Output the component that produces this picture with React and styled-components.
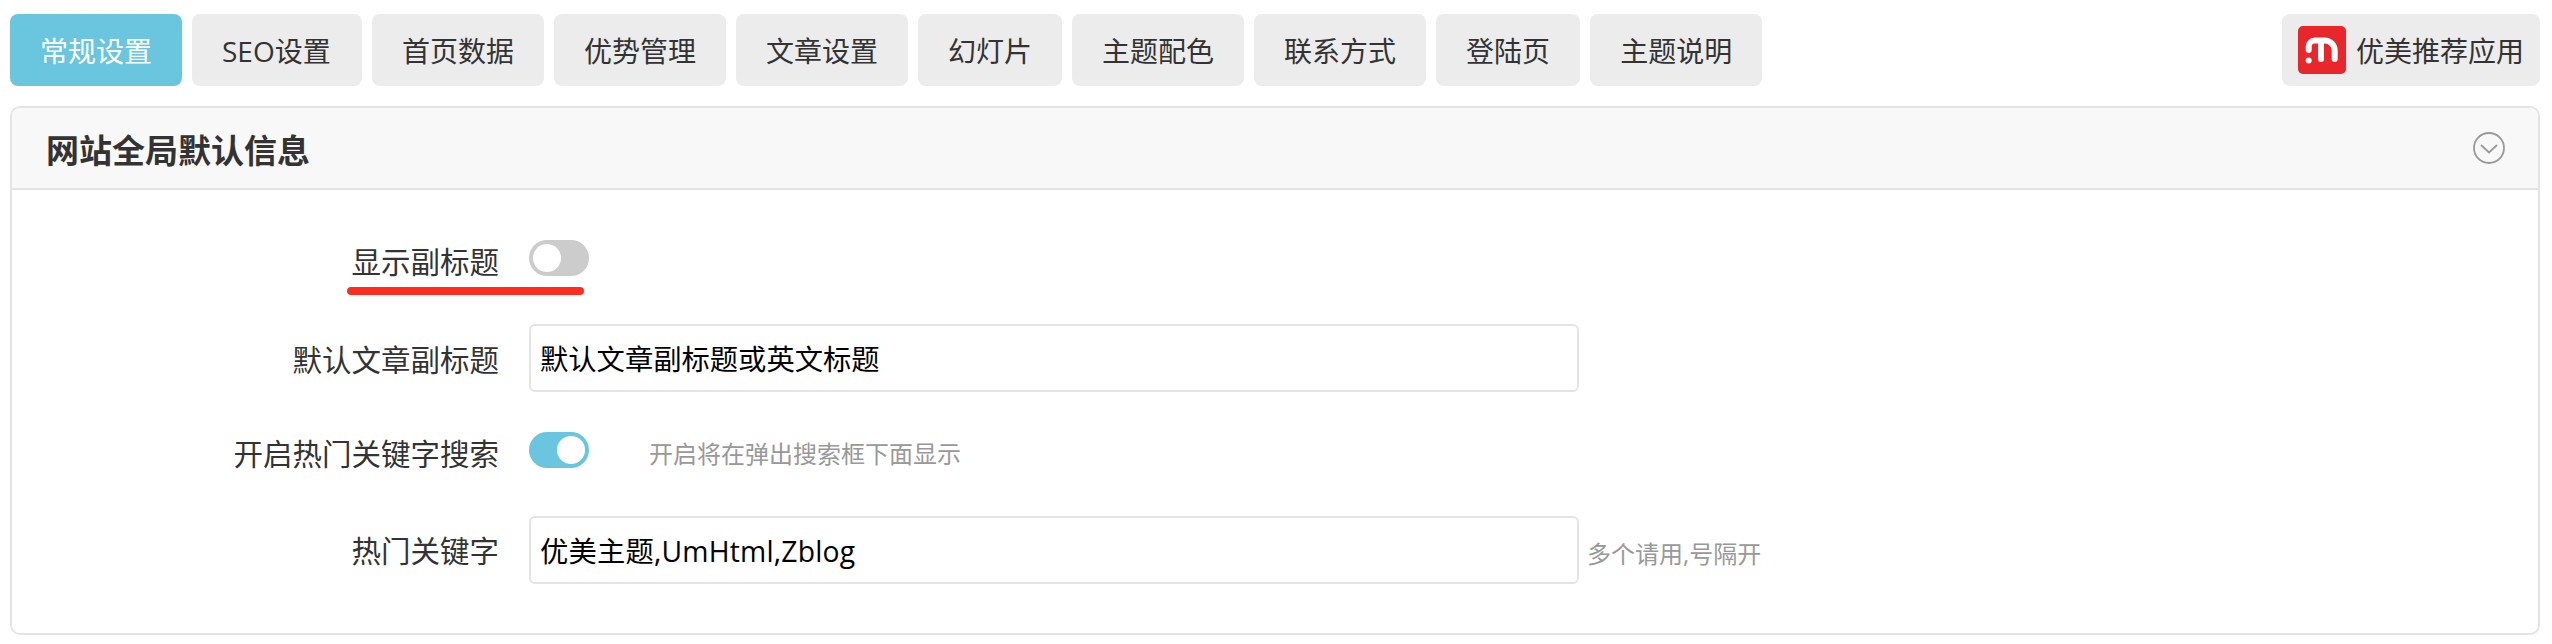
import React from "react";
import styled, { createGlobalStyle } from "styled-components";

const Global = createGlobalStyle`
  html, body {
    margin: 0;
    padding: 0;
    background: #fff;
  }
  body {
    font-family: "Open Sans", "Noto Sans CJK SC", sans-serif;
    font-size: 28px;
    color: #333;
  }
`;

const Page = styled.div`
  padding: 14px 12px 0 10px;
`;

const TabBar = styled.div`
  display: flex;
  gap: 10px;
  margin-bottom: 20px;
`;

const Tab = styled.a`
  display: flex;
  align-items: center;
  box-sizing: border-box;
  height: 72px;
  min-width: ${(props) => props.$min || 0}px;
  padding: 0 30px;
  border-radius: 8px;
  background: ${(props) => (props.$active ? "#6ac6de" : "#ececec")};
  color: ${(props) => (props.$active ? "#fff" : "#333")};
  white-space: nowrap;
`;

const AppsTab = styled(Tab)`
  margin-left: auto;
  padding: 0 16px;
  gap: 10px;
`;

const Panel = styled.section`
  border: 2px solid #e4e4e4;
  border-radius: 10px;
  height: 529px;
  box-sizing: border-box;
`;

const PanelHead = styled.header`
  display: flex;
  align-items: center;
  justify-content: space-between;
  box-sizing: border-box;
  height: 82px;
  padding: 0 33px 0 34px;
  background: #f8f8f8;
  border-bottom: 2px solid #e4e4e4;
  border-radius: 8px 8px 0 0;
`;

const PanelTitle = styled.h2`
  margin: 2px 0 0;
  font-size: 33px;
  font-weight: 700;
  color: #333;
`;

const Form = styled.div`
  padding: 50px 0 0;
`;

const Row = styled.div`
  display: flex;
  align-items: center;
  margin-bottom: ${(props) => props.$after}px;
`;

const Label = styled.label`
  position: relative;
  flex: none;
  box-sizing: border-box;
  width: 517px;
  padding-right: 30px;
  font-size: 29.5px;
  text-align: right;
  line-height: 36px;
  top: ${(props) => props.$top}px;
`;

const Marker = styled.span`
  position: absolute;
  left: 335px;
  top: 43px;
  width: 237px;
  height: 8px;
  border-radius: 4px;
  background: #ff2d20;
`;

const Switch = styled.span`
  position: relative;
  flex: none;
  width: 60px;
  height: 36px;
  border-radius: 18px;
  background: ${(props) => (props.$on ? "#6ac6de" : "#ccc")};

  &::after {
    content: "";
    position: absolute;
    top: 4px;
    left: ${(props) => (props.$on ? "28px" : "4px")};
    width: 28px;
    height: 28px;
    border-radius: 50%;
    background: #fff;
  }
`;

const TextField = styled.input`
  flex: none;
  box-sizing: border-box;
  width: 1050px;
  height: 68px;
  padding: 0 9px 2px;
  border: 2px solid #e4e4e4;
  border-radius: 6px;
  outline: none;
  background: #fff;
  color: #000;
  font: inherit;
  font-size: 28.3px;
  letter-spacing: ${(props) => props.$spacing || 0}px;
`;

const Hint = styled.span`
  position: relative;
  top: ${(props) => props.$top || 0}px;
  margin-left: ${(props) => props.$gap}px;
  font-size: 24px;
  color: #999;
  white-space: nowrap;
`;

const tabs = [
  { name: "常规设置" },
  { name: "SEO设置", min: 170 },
  { name: "首页数据" },
  { name: "优势管理" },
  { name: "文章设置" },
  { name: "幻灯片" },
  { name: "主题配色" },
  { name: "联系方式" },
  { name: "登陆页" },
  { name: "主题说明" },
];

const BrandLogo = () => (
  <svg width="48" height="48" viewBox="0 0 48 48">
    <rect width="48" height="48" rx="5" fill="#e8262b" />
    <g fill="none" stroke="#fff" strokeWidth="6" strokeLinecap="round">
      <path d="M10.700 24v-3.500a6 6 0 0 1 6-6h10a10 10 0 0 1 10 10V33" />
      <path d="M23 33V16" />
    </g>
    <circle cx="10.700" cy="34.500" r="3" fill="#fff" />
  </svg>
);

const ChevronCircle = () => (
  <svg width="32" height="32" viewBox="0 0 32 32" fill="none" stroke="#999" strokeWidth="1.800">
    <circle cx="16" cy="16" r="15" />
    <path d="M8 13l8 7.500 8-7.500" />
  </svg>
);

export default function App() {
  return (
    <Page>
      <Global />
      <TabBar>
        {tabs.map((tab, i) => (
          <Tab key={tab.name} $active={i === 0} $min={tab.min}>
            {tab.name}
          </Tab>
        ))}
        <AppsTab>
          <BrandLogo />
          优美推荐应用
        </AppsTab>
      </TabBar>
      <Panel>
        <PanelHead>
          <PanelTitle>网站全局默认信息</PanelTitle>
          <ChevronCircle />
        </PanelHead>
        <Form>
          <Row $after={48}>
            <Label $top={4}>
              显示副标题
              <Marker />
            </Label>
            <Switch />
          </Row>
          <Row $after={40}>
            <Label $top={2}>默认文章副标题</Label>
            <TextField defaultValue="默认文章副标题或英文标题" />
          </Row>
          <Row $after={48}>
            <Label $top={4}>开启热门关键字搜索</Label>
            <Switch $on />
            <Hint $gap={60} $top={2}>开启将在弹出搜索框下面显示</Hint>
          </Row>
          <Row $after={0}>
            <Label $top={1}>热门关键字</Label>
            <TextField $spacing={0.2} defaultValue="优美主题,UmHtml,Zblog" />
            <Hint $gap={8} $top={2}>多个请用,号隔开</Hint>
          </Row>
        </Form>
      </Panel>
    </Page>
  );
}
